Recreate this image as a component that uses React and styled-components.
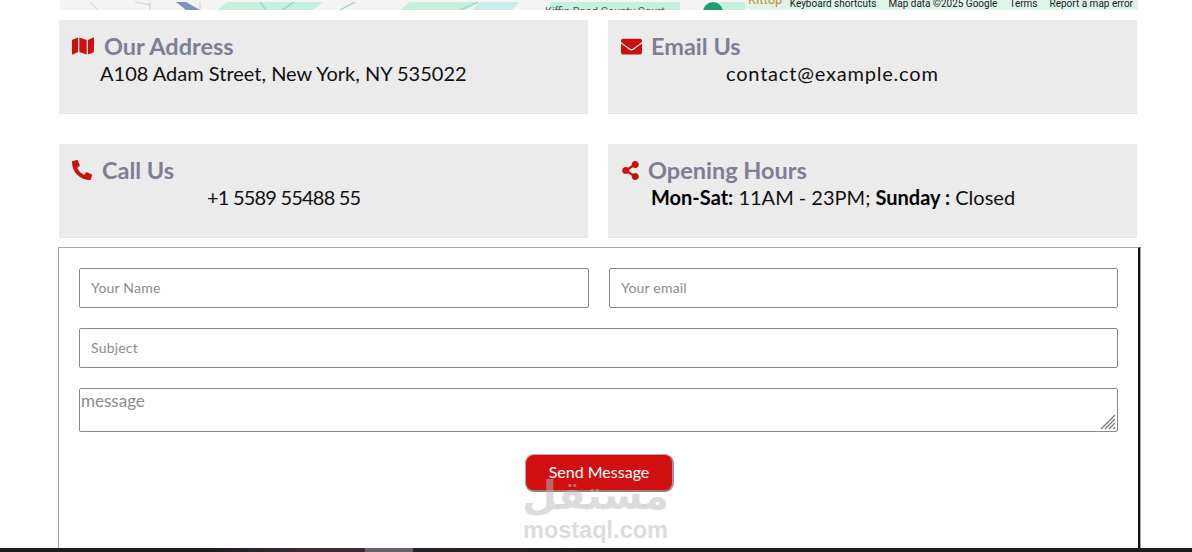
import * as React from 'react'
import styled, { createGlobalStyle } from 'styled-components'
import { FaEnvelope, FaMap, FaPhoneAlt, FaShareAlt } from 'react-icons/fa'

const GlobalStyle = createGlobalStyle`
  html, body {
    margin: 0;
    padding: 0;
    height: 552px;
    overflow: hidden;
    background: #fff;
    font-family: "Lato", "Noto Sans", sans-serif;
  }
`

const Page = styled.div`
  position: relative;
  width: 1192px;
  height: 552px;
  display: flex;
  flex-direction: column;
  overflow: hidden;
`

const Content = styled.main`
  flex: 1;
  padding: 0 52px 0 59px;
  display: flex;
  flex-direction: column;
`

const MapStrip = styled.div`
  position: relative;
  width: 1078px;
  height: 10px;
  margin-left: 1px;
  overflow: hidden;
  background: #f4f5f3;
`

const MapLinks = styled.div`
  position: absolute;
  top: -2px;
  right: 5px;
  display: flex;
  gap: 12px;
  font-family: "Roboto", sans-serif;
  font-size: 10px;
  line-height: 12px;
  color: #222;
  white-space: nowrap;
`

const CardGrid = styled.div`
  width: 1078px;
  margin-top: 10px;
  display: grid;
  grid-template-columns: 529px 529px;
  grid-auto-rows: 94px;
  column-gap: 20px;
  row-gap: 30px;
`

const Card = styled.section`
  background: #ebebeb;
  border-bottom: 1px solid #e4e4e4;
  box-sizing: border-box;
  padding: 13px 12px 0 13px;
`

const CardTitle = styled.h3`
  margin: 0;
  display: flex;
  align-items: center;
  gap: ${p => p.$gap}px;
  height: 26px;
  font-size: 23.5px;
  font-weight: 700;
  color: #7e7e94;
  svg {
    color: #cb1010;
    font-size: ${p => p.$icon}px;
    flex: none;
  }
`

const CardText = styled.p`
  margin: 1px 0 0;
  padding-left: ${p => p.$indent}px;
  font-size: 20px;
  line-height: 26px;
  letter-spacing: ${p => p.$track || 0}px;
  color: #111;
  white-space: nowrap;
  b {
    font-weight: 700;
    color: #000;
  }
`

const ContactForm = styled.form`
  width: 1082px;
  height: 301px;
  margin: 9px 0 0 -1px;
  box-sizing: border-box;
  padding: 20px 20px 0;
  border: 1px solid #a6a6a6;
  border-right: 2px solid #111;
  border-bottom: none;
  box-shadow: 1px 0 0 #a9a9a9;
  display: flex;
  flex-direction: column;
  gap: 20px;
`

const FieldRow = styled.div`
  display: grid;
  grid-template-columns: 510px 509px;
  gap: 20px;
`

const Field = styled.input`
  display: block;
  width: 100%;
  height: 40px;
  box-sizing: border-box;
  padding: 0 11px 2px;
  border: 1px solid #8a8a8a;
  border-radius: 2px;
  background: #fff;
  font-family: inherit;
  font-size: 14px;
  letter-spacing: 0.2px;
  &::placeholder {
    color: #8b8b8b;
    opacity: 1;
  }
`

const MessageWrap = styled.div`
  position: relative;
  width: 1039px;
  height: 44px;
`

const MessageArea = styled.textarea`
  display: block;
  width: 100%;
  height: 100%;
  box-sizing: border-box;
  padding: 1px;
  border: 1px solid #8a8a8a;
  border-radius: 2px;
  background: #fff;
  font-family: inherit;
  font-size: 17px;
  resize: none;
  &::placeholder {
    color: #8b8b8b;
    opacity: 1;
  }
`

const ResizeGrip = styled.svg`
  position: absolute;
  right: 2px;
  bottom: 2px;
  pointer-events: none;
`

const SubmitRow = styled.div`
  display: flex;
  justify-content: center;
  margin: 2px 0 0 2px;
`

const SendButton = styled.button`
  width: 149px;
  height: 38px;
  box-sizing: border-box;
  padding: 0 0 2px;
  border: 1px solid #d8a0a0;
  border-bottom: 2px solid #9a7a7a;
  border-right: 2px solid #b09090;
  border-radius: 9px;
  background: #d01010;
  color: #fff;
  font-family: inherit;
  font-size: 16px;
`

const Footer = styled.footer`
  height: 4px;
  flex: none;
  background: linear-gradient(90deg, #1b1b1b 0, #1b1b1b 200px, #3a2a3a 300px, #3a2a3a 365px, #6a6068 365px, #6a6068 413px, #2a2228 413px, #1b1b1b 620px, #1b1b1b 100%);
`

const Watermark = styled.div`
  position: absolute;
  left: 523px;
  top: 470px;
  width: 145px;
  display: flex;
  flex-direction: column;
  align-items: center;
  color: rgba(185, 185, 185, 0.5);
  font-weight: 700;
  pointer-events: none;
`

const WatermarkArabic = styled.span`
  font-family: "DejaVu Sans", sans-serif;
  font-size: 40px;
  line-height: 50px;
  height: 50px;
`

const WatermarkLatin = styled.span`
  font-family: "Liberation Sans", sans-serif;
  font-size: 23.5px;
  line-height: 20px;
`

const MapDrawing = () => (
  <svg width="1078" height="10" viewBox="0 0 1078 10" style={{ display: 'block' }}>
    <path d="M167 2h96l-10 8h-96z" fill="#c6f0de" />
    <path d="M350 2h70l-15 8h-65z" fill="#c6f0de" />
    <path d="M420 2h40l-8 8h-40z" fill="#cfeaea" />
    <path d="M490 2h130v8H490z" fill="#c6f0de" />
    <path d="M660 2h25v8h-40z" fill="#c6f0de" />
    <path d="M690 0h388v10H690z" fill="#dff3e9" />
    <path d="M116 2h10l14 8h-14z" fill="#8094b4" />
    <path d="M280 10l15-8M200 2l6 8M400 10l18-8M222 10l12-8" stroke="#8fd4c6" strokeWidth="1.2" fill="none" />
    <path d="M30 2l8 8M75 2l16 3M140 2v8M90 2v8" stroke="#cfcfcf" fill="none" />
    <circle cx="653" cy="12" r="10" fill="#1e9e6e" />
    <text x="485" y="15" fontFamily="Roboto, sans-serif" fontSize="11" fill="#555">Kiffin Road County Court</text>
    <text x="688" y="4" fontFamily="Roboto, sans-serif" fontSize="13" fill="#d08a3c">Kittop</text>
  </svg>
)

const App = () => {
  return (
    <Page>
      <GlobalStyle />
      <Content>
        <MapStrip>
          <MapDrawing />
          <MapLinks>
            <span>Keyboard shortcuts</span>
            <span>Map data ©2025 Google</span>
            <span>Terms</span>
            <span>Report a map error</span>
          </MapLinks>
        </MapStrip>

        <CardGrid>
          <Card>
            <CardTitle $gap={10} $icon={22}><FaMap />Our Address</CardTitle>
            <CardText $indent={28}>A108 Adam Street, New York, NY 535022</CardText>
          </Card>
          <Card>
            <CardTitle $gap={9} $icon={21}><FaEnvelope />Email Us</CardTitle>
            <CardText $indent={105} $track={0.8}>contact@example.com</CardText>
          </Card>
          <Card>
            <CardTitle $gap={10} $icon={20}><FaPhoneAlt />Call Us</CardTitle>
            <CardText $indent={135} $track={-0.8}>+1 5589 55488 55</CardText>
          </Card>
          <Card>
            <CardTitle $gap={8} $icon={19}><FaShareAlt />Opening Hours</CardTitle>
            <CardText $indent={30}><b>Mon-Sat:</b> 11AM - 23PM; <b>Sunday :</b> Closed</CardText>
          </Card>
        </CardGrid>

        <ContactForm>
          <FieldRow>
            <Field placeholder="Your Name" />
            <Field placeholder="Your email" />
          </FieldRow>
          <Field placeholder="Subject" />
          <MessageWrap>
            <MessageArea placeholder="message" />
            <ResizeGrip width="16" height="16" viewBox="0 0 16 16">
              <path d="M1 15L15 1M5 15L15 5M9 15L15 9M13 15L15 13" stroke="#777" strokeWidth="1.2" fill="none" />
            </ResizeGrip>
          </MessageWrap>
          <SubmitRow>
            <SendButton type="button">Send Message</SendButton>
          </SubmitRow>
        </ContactForm>
      </Content>
      <Footer />
      <Watermark>
        <WatermarkArabic>مستقل</WatermarkArabic>
        <WatermarkLatin>mostaql.com</WatermarkLatin>
      </Watermark>
    </Page>
  )
}

export default App
